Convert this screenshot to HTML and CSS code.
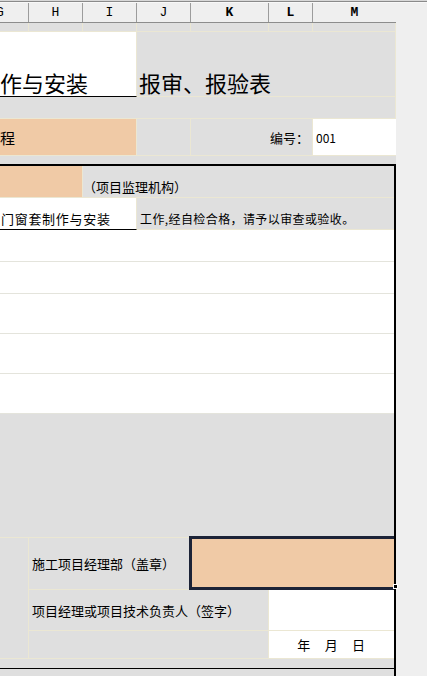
FILE: index.html
```html
<!DOCTYPE html>
<html lang="zh-CN">
<head>
    <meta charset="UTF-8">
    <title>报审、报验表</title>
    <link rel="stylesheet" href="styles.css">
</head>
<body>
    <div class="topbar"></div>
    <div class="sheet">
        <!-- column letters -->
        <div class="row colhead">
            <div class="hd first"><span>G</span></div>
            <div class="hd">H</div>
            <div class="hd">I</div>
            <div class="hd">J</div>
            <div class="hd sel">K</div>
            <div class="hd sel">L</div>
            <div class="hd sel last">M</div>
        </div>

        <div class="row h9">
            <div class="c"></div><div class="c"></div><div class="c"></div><div class="c"></div>
            <div class="c"></div><div class="c"></div><div class="c"></div>
        </div>

        <div class="row h65">
            <div class="c white ul title span3">作与安装</div>
            <div class="c title title-right span4">报审、报验表</div>
        </div>

        <div class="row h22">
            <div class="c span7"></div>
        </div>

        <div class="row h37">
            <div class="c peach big span3">程</div>
            <div class="c"></div>
            <div class="c label span2">编号：</div>
            <div class="c white num">001</div>
        </div>

        <div class="row h8">
            <div class="c span7 noline"></div>
        </div>

        <div class="frame">
            <div class="row h32">
                <div class="c peach span2"></div>
                <div class="c low span5">（项目监理机构）</div>
            </div>
            <div class="row h32">
                <div class="c white ul wide span3">门窗套制作与安装</div>
                <div class="c small span4">工作,经自检合格，请予以审查或验收。</div>
            </div>

            <div class="row h32"><div class="c blank span7"></div></div>
            <div class="row h32"><div class="c blank span7"></div></div>
            <div class="row h40"><div class="c blank span7"></div></div>
            <div class="row h40"><div class="c blank span7"></div></div>
            <div class="row h40"><div class="c blank span7"></div></div>

            <div class="row h124"><div class="c span7 edge"></div></div>

            <div class="sign">
                <div class="c merge"></div>
                <div class="c text span3">施工项目经理部（盖章）</div>
                <div class="c peach picked span3"><span class="handle"></span></div>
                <div class="c text span4">项目经理或项目技术负责人（签字）</div>
                <div class="c white edge span2"></div>
                <div class="c span4"></div>
                <div class="c white edge date span2">年　月　日</div>
            </div>

            <div class="row h10"><div class="c span7 closing"></div></div>
            <div class="row h8"><div class="c span7 noline"></div></div>
        </div>
    </div>
</body>
</html>
```

FILE: styles.css
```css
* {
    box-sizing: border-box;
}
body {
    margin: 0;
    background: #efefef;
    font-family: "Noto Sans CJK SC", "Noto Sans", sans-serif;
    color: #000;
    overflow: hidden;
}
.topbar {
    height: 3px;
    background: linear-gradient(#d8d8d8 0 1px, #8a8a8a 1px 2px, #f8f8f8 2px 3px);
}
.sheet {
    width: 396px;
}
.row {
    display: grid;
    grid-template-columns: 29px 54px 54px 54px 78px 44px 83px;
}
.frame {
    border-top: 2px solid #000;
    border-right: 2px solid #000;
}
.frame .row,
.sign {
    grid-template-columns: 29px 54px 54px 54px 78px 44px 81px;
}

/* column header */
.colhead {
    height: 20px;
    border-bottom: 1px solid #8c8c8c;
    background: #efefef;
}
.hd {
    border-right: 1px solid #9c9c9c;
    font: 13px "Liberation Mono", monospace;
    display: flex;
    align-items: center;
    justify-content: center;
    overflow: hidden;
}
.hd.first {
    justify-content: flex-start;
}
.hd.first span {
    margin-left: -4px;
}
.hd.sel {
    font-weight: 700;
}
.hd.last {
    border-right: none;
}

/* cells */
.c {
    background: #dfdfdf;
    border-right: 1px solid #ebe7d3;
    border-bottom: 1px solid #ebe7d3;
    display: flex;
    align-items: center;
    white-space: nowrap;
    overflow: hidden;
    font-size: 13px;
}
.span2 { grid-column: span 2; }
.span3 { grid-column: span 3; }
.span4 { grid-column: span 4; }
.span5 { grid-column: span 5; }
.span7 { grid-column: span 7; }

.h8 { height: 8px; }
.h9 { height: 9px; }
.h10 { height: 10px; }
.h22 { height: 22px; }
.h32 { height: 32px; }
.h37 { height: 37px; }
.h40 { height: 40px; }
.h65 { height: 65px; }
.h124 { height: 124px; }

.white { background: #fff; }
.peach { background: #f0caa6; }
.ul { border-bottom-color: #000; }
.noline { border: none; }
.edge { border-right: none; }

.title {
    font-size: 22px;
    line-height: 1;
    align-items: flex-end;
    padding-bottom: 3px;
}
.title-right {
    padding-left: 2px;
}
.big {
    font-size: 15px;
}
.label {
    justify-content: flex-end;
    padding-right: 3px;
}
.num {
    font-size: 12px;
    padding-left: 3px;
    border-right: none;
}

/* framed form */
.low {
    align-items: flex-end;
    padding-bottom: 1px;
    border-right: none;
}
.wide {
    letter-spacing: 0.7px;
    padding-left: 1px;
    align-items: flex-end;
    padding-bottom: 1px;
}
.small {
    font-size: 12px;
    letter-spacing: 0.4px;
    padding-left: 3px;
    border-right: none;
    align-items: flex-end;
    padding-bottom: 2px;
}
.blank {
    background: #fff;
    border-right: none;
    border-bottom-color: #e4e4dc;
}
.sign {
    display: grid;
    grid-template-rows: 52px 41px 28px;
}
.merge {
    grid-row: span 3;
}
.text {
    padding-left: 3px;
}
.picked {
    position: relative;
    overflow: visible;
    margin: -2px 0 0 -2px;
    border: 3px solid #1c2337;
    border-right: none;
}
.handle {
    position: absolute;
    right: -4px;
    bottom: -2px;
    width: 5px;
    height: 5px;
    background: #000;
    border: 1px solid #fff;
}
.date {
    justify-content: center;
    letter-spacing: 0.7px;
}
.closing {
    border-right: none;
    border-bottom: 1px solid #000;
}
```
